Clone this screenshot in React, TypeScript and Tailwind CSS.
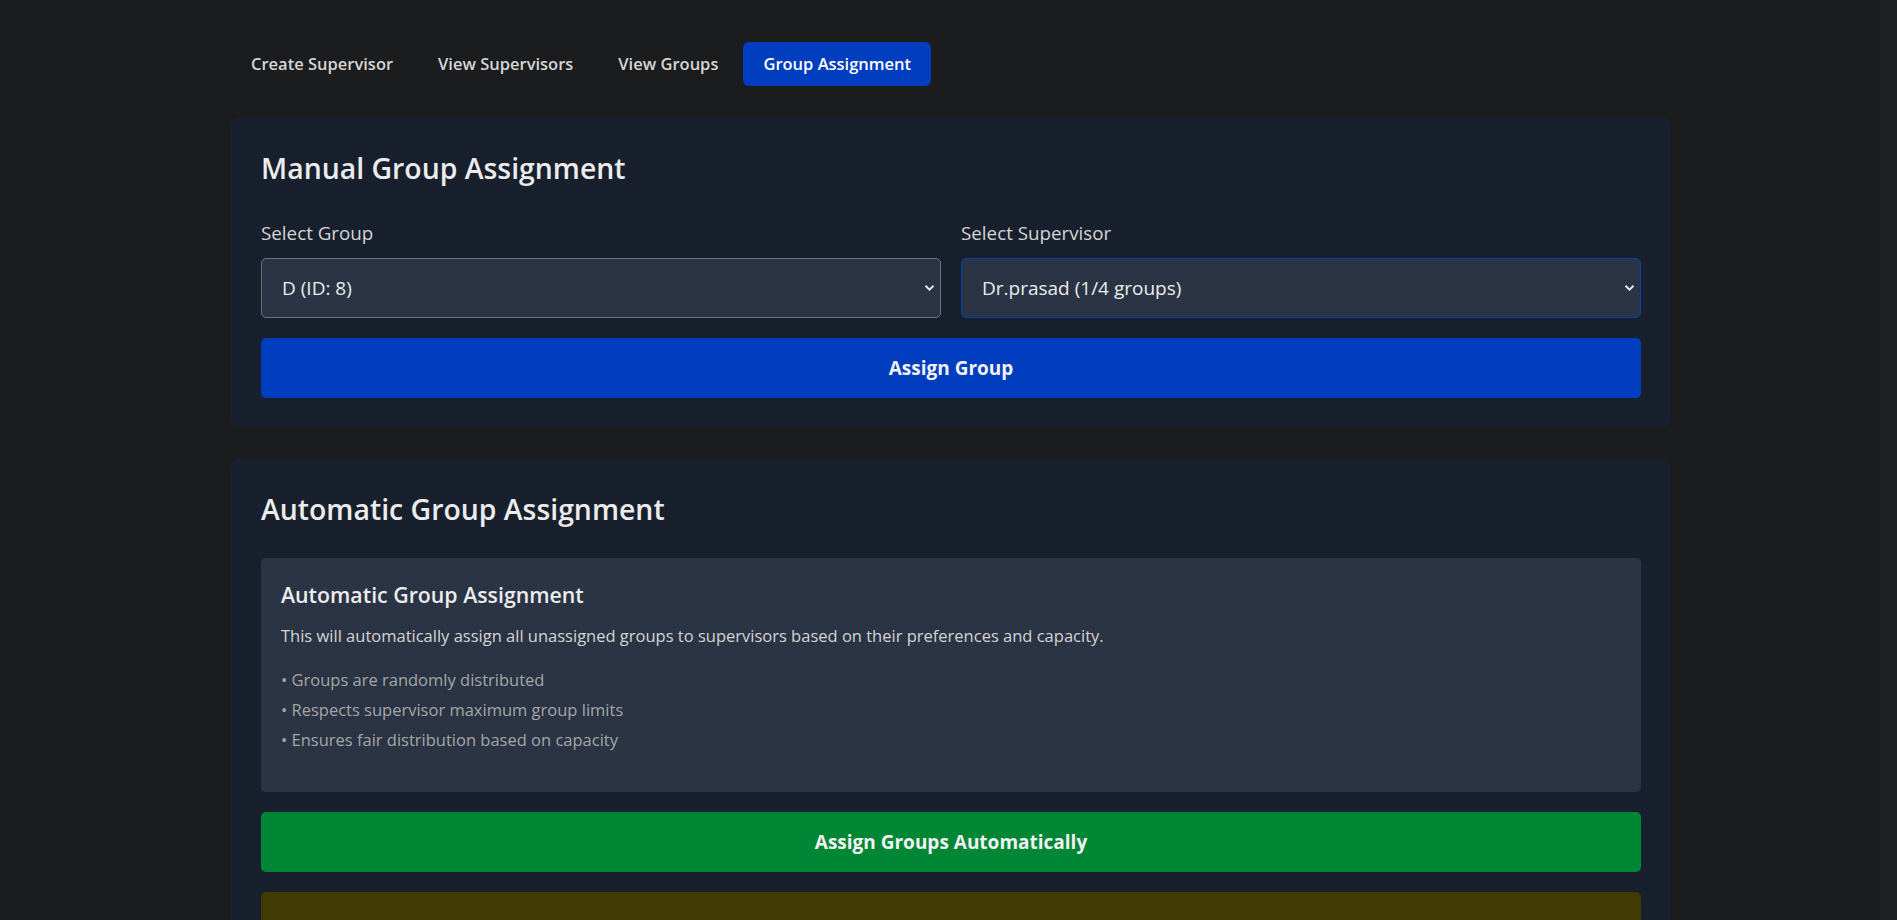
import { useState } from "react";

const tabs = [
  "Create Supervisor",
  "View Supervisors",
  "View Groups",
  "Group Assignment",
];

const groups = [
  { id: 8, name: "D" },
  { id: 9, name: "E" },
  { id: 10, name: "F" },
];

const supervisors = [
  { id: 1, name: "Dr.prasad", assigned: 1, max: 4 },
  { id: 2, name: "Dr.silva", assigned: 2, max: 3 },
];

const rules = [
  "Groups are randomly distributed",
  "Respects supervisor maximum group limits",
  "Ensures fair distribution based on capacity",
];

const Chevron = () => (
  <svg
    width="11"
    height="7"
    viewBox="0 0 11 7"
    className="pointer-events-none absolute right-[6px] top-1/2 -translate-y-1/2 text-[#e8e8e8]"
  >
    <path
      d="M1.5 1.2L5.5 5.2L9.5 1.2"
      fill="none"
      stroke="currentColor"
      strokeWidth="2"
    />
  </svg>
);

const App = () => {
  const [activeTab, setActiveTab] =
    useState("Group Assignment");

  const [groupId, setGroupId] =
    useState("8");

  const [supervisorId, setSupervisorId] =
    useState("1");

  return (
    <div className="flex h-[920px] overflow-hidden bg-[#1b1c1e] font-['Open_Sans','Noto_Sans',sans-serif] text-[#e5e7eb]">
      <main className="min-w-0 flex-1">
        <div className="ml-[231px] w-[1440px] pt-[42px]">
          {/* Tabs */}
          <div className="mb-[31px] flex gap-[5px]">
            {tabs.map((tab) => (
              <button
                key={tab}
                type="button"
                onClick={() => setActiveTab(tab)}
                className={
                  tab === activeTab
                    ? "rounded-md bg-[#013dbf] px-5 py-[10px] text-[16.5px] font-semibold leading-6 text-white"
                    : "rounded-md px-5 py-[10px] text-[16.5px] font-semibold leading-6 text-[#d6d6d6]"
                }
              >
                {tab}
              </button>
            ))}
          </div>

          {/* Manual assignment */}
          <section className="rounded-lg bg-[#18202d] p-[30px]">
            <h2 className="mt-[3px] text-[28.4px] font-semibold leading-9 text-[#ececec]">
              Manual Group Assignment
            </h2>

            <div className="mt-[33px] grid grid-cols-2 gap-5">
              <div>
                <label className="mb-[11px] block text-[18.8px] leading-7 text-[#d4d4d4]">
                  Select Group
                </label>

                <div className="relative">
                  <select
                    value={groupId}
                    onChange={(event) =>
                      setGroupId(event.target.value)
                    }
                    className="h-[60px] w-full appearance-none rounded-[5px] border border-[#6c6f75] bg-[#2b3444] pl-5 pr-8 text-[19px] text-[#ececec] outline-none"
                  >
                    {groups.map((group) => (
                      <option key={group.id} value={group.id}>
                        {group.name} (ID: {group.id})
                      </option>
                    ))}
                  </select>
                  <Chevron />
                </div>
              </div>

              <div>
                <label className="mb-[11px] block text-[18.8px] leading-7 text-[#d4d4d4]">
                  Select Supervisor
                </label>

                <div className="relative">
                  <select
                    value={supervisorId}
                    onChange={(event) =>
                      setSupervisorId(event.target.value)
                    }
                    className="h-[60px] w-full appearance-none rounded-[5px] border border-[#0c3ea8] bg-[#2b3444] pl-5 pr-8 text-[19px] text-[#ececec] outline-none"
                  >
                    {supervisors.map((supervisor) => (
                      <option
                        key={supervisor.id}
                        value={supervisor.id}
                      >
                        {supervisor.name} ({supervisor.assigned}/
                        {supervisor.max} groups)
                      </option>
                    ))}
                  </select>
                  <Chevron />
                </div>
              </div>
            </div>

            <button
              type="button"
              className="mt-5 h-[60px] w-full rounded-[5px] bg-[#013dbf] text-[19px] font-bold text-[#f2f2f2]"
            >
              Assign Group
            </button>
          </section>

          {/* Automatic assignment */}
          <section className="mt-[30px] rounded-lg bg-[#18202d] p-[30px]">
            <h2 className="mt-[3px] text-[28.4px] font-semibold leading-9 text-[#ececec]">
              Automatic Group Assignment
            </h2>

            <div className="mt-[31px] rounded-[5px] bg-[#2b3444] px-5 pb-[37px] pt-5">
              <h3 className="text-[21.3px] font-semibold leading-[34px] text-[#ececec]">
                Automatic Group Assignment
              </h3>

              <p className="mt-3 text-[16.5px] leading-6 text-[#d4d4d4]">
                This will automatically assign all unassigned
                groups to supervisors based on their preferences
                and capacity.
              </p>

              <ul className="mt-[17px] text-[16.5px] leading-[30px] text-[#a6a6a6]">
                {rules.map((rule) => (
                  <li key={rule}>• {rule}</li>
                ))}
              </ul>
            </div>

            <button
              type="button"
              className="mt-5 h-[60px] w-full rounded-[5px] bg-[#008735] text-[19px] font-bold text-[#f2f2f2]"
            >
              Assign Groups Automatically
            </button>

            <div className="mt-5 rounded-[5px] bg-[#413a02] p-5 text-base leading-7 text-[#f5b82e]">
              Note: Automatic assignment only affects groups that
              are still unassigned.
            </div>
          </section>
        </div>
      </main>

      <div className="w-[17px] shrink-0 bg-[#1f2023]" />
    </div>
  );
};

export default App;
